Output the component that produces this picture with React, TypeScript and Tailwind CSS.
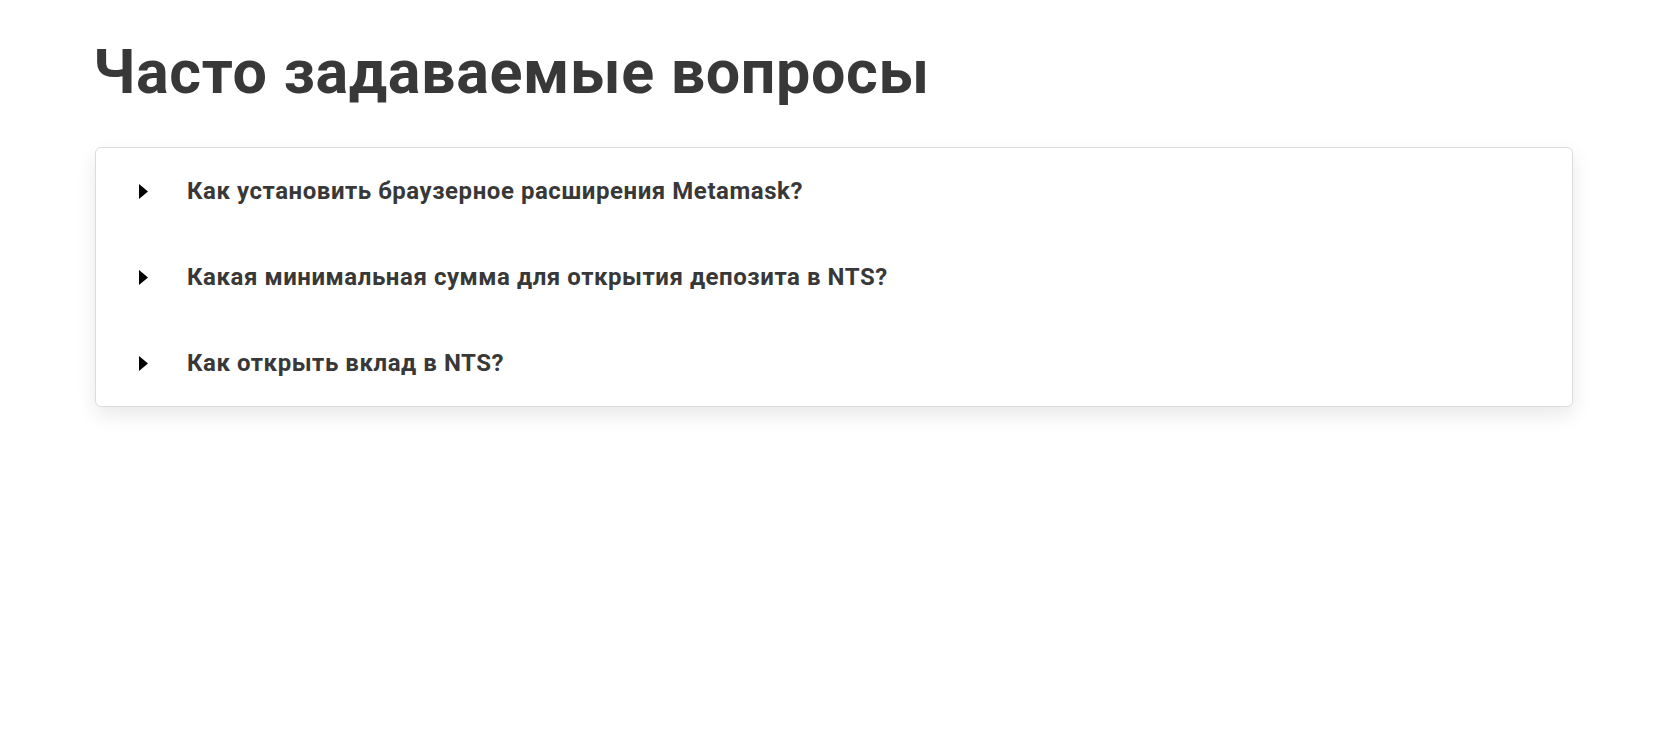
import React from "react";

const questions = [
  "Как установить браузерное расширения Metamask?",
  "Какая минимальная сумма для открытия депозита в NTS?",
  "Как открыть вклад в NTS?",
];

function Caret() {
  return (
    <svg width="9" height="15" viewBox="0 0 9 15" className="shrink-0">
      <path d="M0 0 L9 7.5 L0 15 Z" fill="#000" />
    </svg>
  );
}

export default function App() {
  return (
    <div className="min-h-[742px] w-full bg-white font-['Roboto',sans-serif] text-[#383838]">
      <div className="pl-[95px] pr-[83px] pt-[28px]">
        <h1 className="-ml-[2px] text-[61px] leading-[88px] font-bold tracking-[0.65px]">Часто задаваемые вопросы</h1>
        <div className="mt-[31px] rounded-[6px] border border-[#dcdcdc] bg-white shadow-[0_8px_20px_rgba(0,0,0,0.09)]">
          {questions.map((q) => (
            <div key={q} className="flex h-[86px] items-center pl-[43px]">
              <Caret />
              <span className="ml-[39px] text-[24px] font-bold leading-none tracking-[0.55px]">{q}</span>
            </div>
          ))}
        </div>
      </div>
    </div>
  );
}
